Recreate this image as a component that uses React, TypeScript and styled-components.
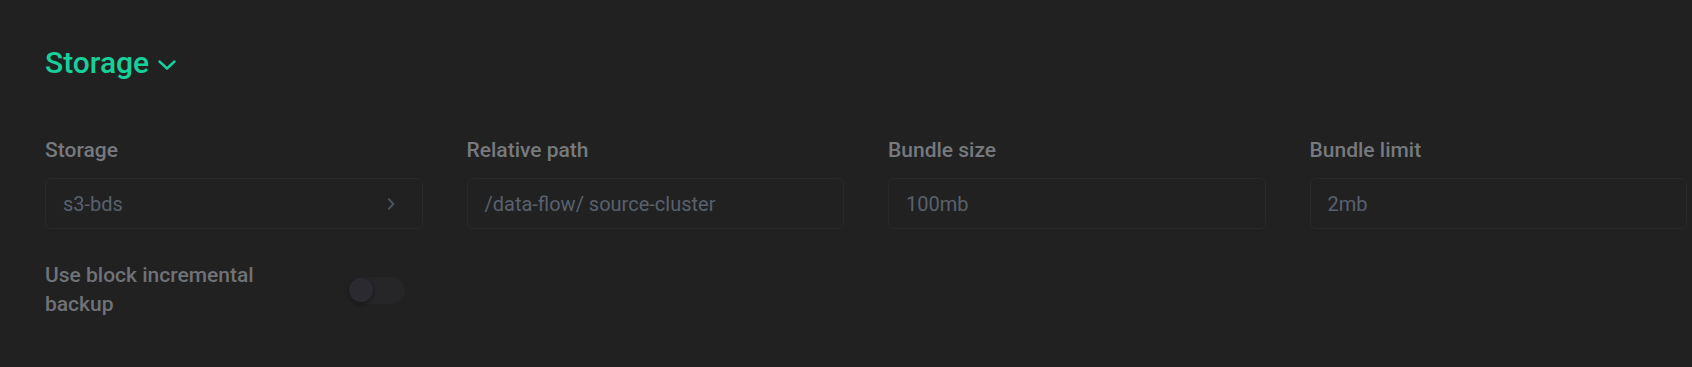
import styled, { createGlobalStyle } from 'styled-components';

const GlobalStyle = createGlobalStyle`
  html, body {
    margin: 0;
    background: #212121;
  }
  body {
    font-family: Roboto, "Liberation Sans", sans-serif;
  }
`;

type Field = {
  label: string;
  value: string;
  select?: boolean;
};

const fields: Field[] = [
  { label: 'Storage', value: 's3-bds', select: true },
  { label: 'Relative path', value: '/data-flow/ source-cluster' },
  { label: 'Bundle size', value: '100mb' },
  { label: 'Bundle limit', value: '2mb' },
];

export default function App() {
  return (
    <>
      <GlobalStyle />
      <Section.Root>
        <Section.Header>
          <Section.Title>Storage</Section.Title>
          <svg width="18" height="10" viewBox="0 0 18 10" fill="none">
            <path d="M1.5 1.5 L9 8.5 L16.5 1.5" stroke="#16d19b" strokeWidth="2.4" strokeLinecap="round" strokeLinejoin="round" />
          </svg>
        </Section.Header>

        <Section.Grid>
          {fields.map((f) => (
            <Section.Field key={f.label}>
              <Section.Label>{f.label}</Section.Label>
              <Section.Input>
                <span>{f.value}</span>
                {f.select && (
                  <svg width="8" height="12" viewBox="0 0 8 12" fill="none">
                    <path d="M1.8 1.2 L6.4 6 L1.8 10.8" stroke="#4b5361" strokeWidth="1.9" strokeLinecap="round" strokeLinejoin="round" />
                  </svg>
                )}
              </Section.Input>
            </Section.Field>
          ))}
        </Section.Grid>

        <Section.ToggleRow>
          <Section.ToggleLabel>Use block incremental backup</Section.ToggleLabel>
          <Section.Track>
            <Section.Knob />
          </Section.Track>
        </Section.ToggleRow>
      </Section.Root>
    </>
  );
}

const Section = {
  Root: styled.div`
    display: flex;
    flex-direction: column;
    padding: 45px 5px 40px 45px;
  `,
  Header: styled.div`
    display: flex;
    align-items: center;
    gap: 9px;
    height: 36px;
    svg {
      margin-top: 3px;
    }
  `,
  Title: styled.h2`
    margin: 0;
    font-size: 30px;
    line-height: 36px;
    font-weight: 500;
    color: #16d19b;
  `,
  Grid: styled.div`
    display: grid;
    grid-template-columns: repeat(4, 1fr);
    column-gap: 44px;
    margin-top: 57px;
  `,
  Field: styled.div`
    display: flex;
    flex-direction: column;
    gap: 16px;
  `,
  Label: styled.label`
    font-size: 21px;
    line-height: 24px;
    font-weight: 500;
    color: #76797e;
  `,
  Input: styled.div`
    display: flex;
    align-items: center;
    justify-content: space-between;
    height: 51px;
    box-sizing: border-box;
    padding: 0 27px 0 17px;
    border: 1px solid #292929;
    border-radius: 6px;
    background: #212121;
    font-size: 20px;
    color: #58616d;
  `,
  ToggleRow: styled.div`
    display: flex;
    align-items: center;
    margin-top: 32px;
  `,
  ToggleLabel: styled.div`
    width: 304px;
    padding-right: 70px;
    box-sizing: border-box;
    font-size: 21px;
    line-height: 29px;
    font-weight: 500;
    color: #6f7277;
  `,
  Track: styled.div`
    position: relative;
    width: 56px;
    height: 27px;
    border-radius: 14px;
    background: #262628;
  `,
  Knob: styled.div`
    position: absolute;
    left: 0;
    top: 1.5px;
    width: 24px;
    height: 24px;
    border-radius: 50%;
    background: #2b2a30;
    box-shadow: 0 2px 4px rgba(0, 0, 0, 0.35);
  `,
};
